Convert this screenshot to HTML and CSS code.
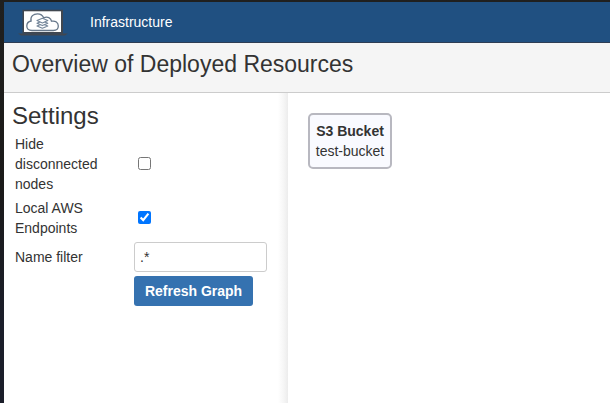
FILE: index.html
```html
<!DOCTYPE html>
<html lang="en">
<head>
<meta charset="utf-8">
<title>Infrastructure</title>
<link rel="stylesheet" href="styles.css">
</head>
<body>
<div class="app">
  <nav class="navbar">
    <svg class="logo" viewBox="0 0 50 28" width="50" height="28" aria-hidden="true">
      <rect x="4.500" y="1.700" width="40.500" height="24" fill="#404750"/>
      <rect x="6" y="3.300" width="37" height="20.700" fill="#fff"/>
      <path d="M0 25.500h50l-3 2H3z" fill="#404750"/>
      <path d="M14 22.500C10.500 22.500 8.800 20.600 8.800 18c0-2.500 1.800-4.600 4.300-5C12 8.300 15.500 5.800 19.500 5.800c3 0 5.200 1.600 6.200 4C29.500 8 33 10 33.500 13.200c4-.8 6.800 1.500 6.800 4.800 0 2.700-2 4.500-5 4.500z" fill="#fff" stroke="#66778a" stroke-width="1.300"/>
      <g fill="#fff" stroke="#74869a" stroke-width="1.100" stroke-linejoin="round">
        <path d="M19 18l5.400 2.300 5.400-2.300-5.400-2.300z"/>
        <path d="M19 15.300l5.400 2.300 5.400-2.300-5.400-2.300z"/>
        <path d="M19 12.600l5.400 2.300 5.400-2.300-5.400-2.300z"/>
      </g>
    </svg>
    <a class="nav-link">Infrastructure</a>
  </nav>
  <header class="page-header"><h1>Overview of Deployed Resources</h1></header>
  <main class="content">
    <aside class="sidebar">
      <h2>Settings</h2>
      <form class="settings">
        <label for="hide">Hide disconnected nodes</label>
        <span class="check"><input type="checkbox" id="hide"></span>
        <label for="local">Local AWS Endpoints</label>
        <span class="check"><input type="checkbox" id="local" checked></span>
        <label for="filter">Name filter</label>
        <input class="text-input" type="text" id="filter" value=".*">
        <button class="button" type="button">Refresh Graph</button>
      </form>
    </aside>
    <section class="graph">
      <div class="node"><strong>S3 Bucket</strong><span>test-bucket</span></div>
    </section>
  </main>
</div>
</body>
</html>
```
FILE: styles.css
```css
* { box-sizing: border-box; }
body {
  margin: 0;
  height: 403px;
  padding: 2px 0 0 4px;
  overflow: hidden;
  background: linear-gradient(#20201f, #1b1a19 45%, #1b1e2a 80%);
  color: #333;
  font: 14px/20px "Liberation Sans", Arial, sans-serif;
}
.app {
  height: 401px;
  display: flex;
  flex-direction: column;
  background: #fff;
}
.navbar {
  height: 41px;
  flex: none;
  display: flex;
  align-items: flex-start;
  background: #205081;
  border-bottom: 1px solid #2e3d54;
}
.logo { margin: 6px 0 0 14px; }
.nav-link { margin: 10px 0 0 22px; color: #fff; }
.page-header {
  height: 50px;
  flex: none;
  padding: 6px 8px;
  background: #f5f5f5;
  border-bottom: 1px solid #ccc;
}
h1, h2 { margin: 0; font-size: 24px; line-height: 30px; font-weight: 400; }
h1 { font-size: 23px; }
.content { flex: 1; display: flex; }
.sidebar {
  width: 284px;
  padding: 8px 8px 0;
  background: linear-gradient(to left, #ececec, #f5f5f5 4px, #fff 10px);
}
.settings {
  display: grid;
  grid-template-columns: 115px 133px;
  gap: 4px;
  padding: 3px 0 0 3px;
}
.settings label { padding-right: 20px; }
.settings label[for="filter"] { align-self: center; }
.check { display: flex; align-items: center; padding: 0 0 2px 4px; }
.check input { width: 13px; height: 13px; margin: 0; }
.text-input {
  width: 133px;
  height: 30px;
  padding: 4px 5px;
  border: 1px solid #ccc;
  border-radius: 3px;
  color: #333;
  font: inherit;
}
.button {
  grid-column: 2;
  justify-self: start;
  width: 119px;
  height: 30px;
  padding: 0;
  border: 0;
  border-radius: 3px;
  background: #3572b0;
  color: #fff;
  font: bold 14px/20px "Liberation Sans", Arial, sans-serif;
}
.graph { flex: 1; padding: 20px; }
.node {
  width: 84px;
  height: 56px;
  padding: 6px 0;
  display: flex;
  flex-direction: column;
  align-items: center;
  border: 2px solid #b8b8c0;
  border-radius: 5px;
  background: #f9faff;
  white-space: nowrap;
}
```
